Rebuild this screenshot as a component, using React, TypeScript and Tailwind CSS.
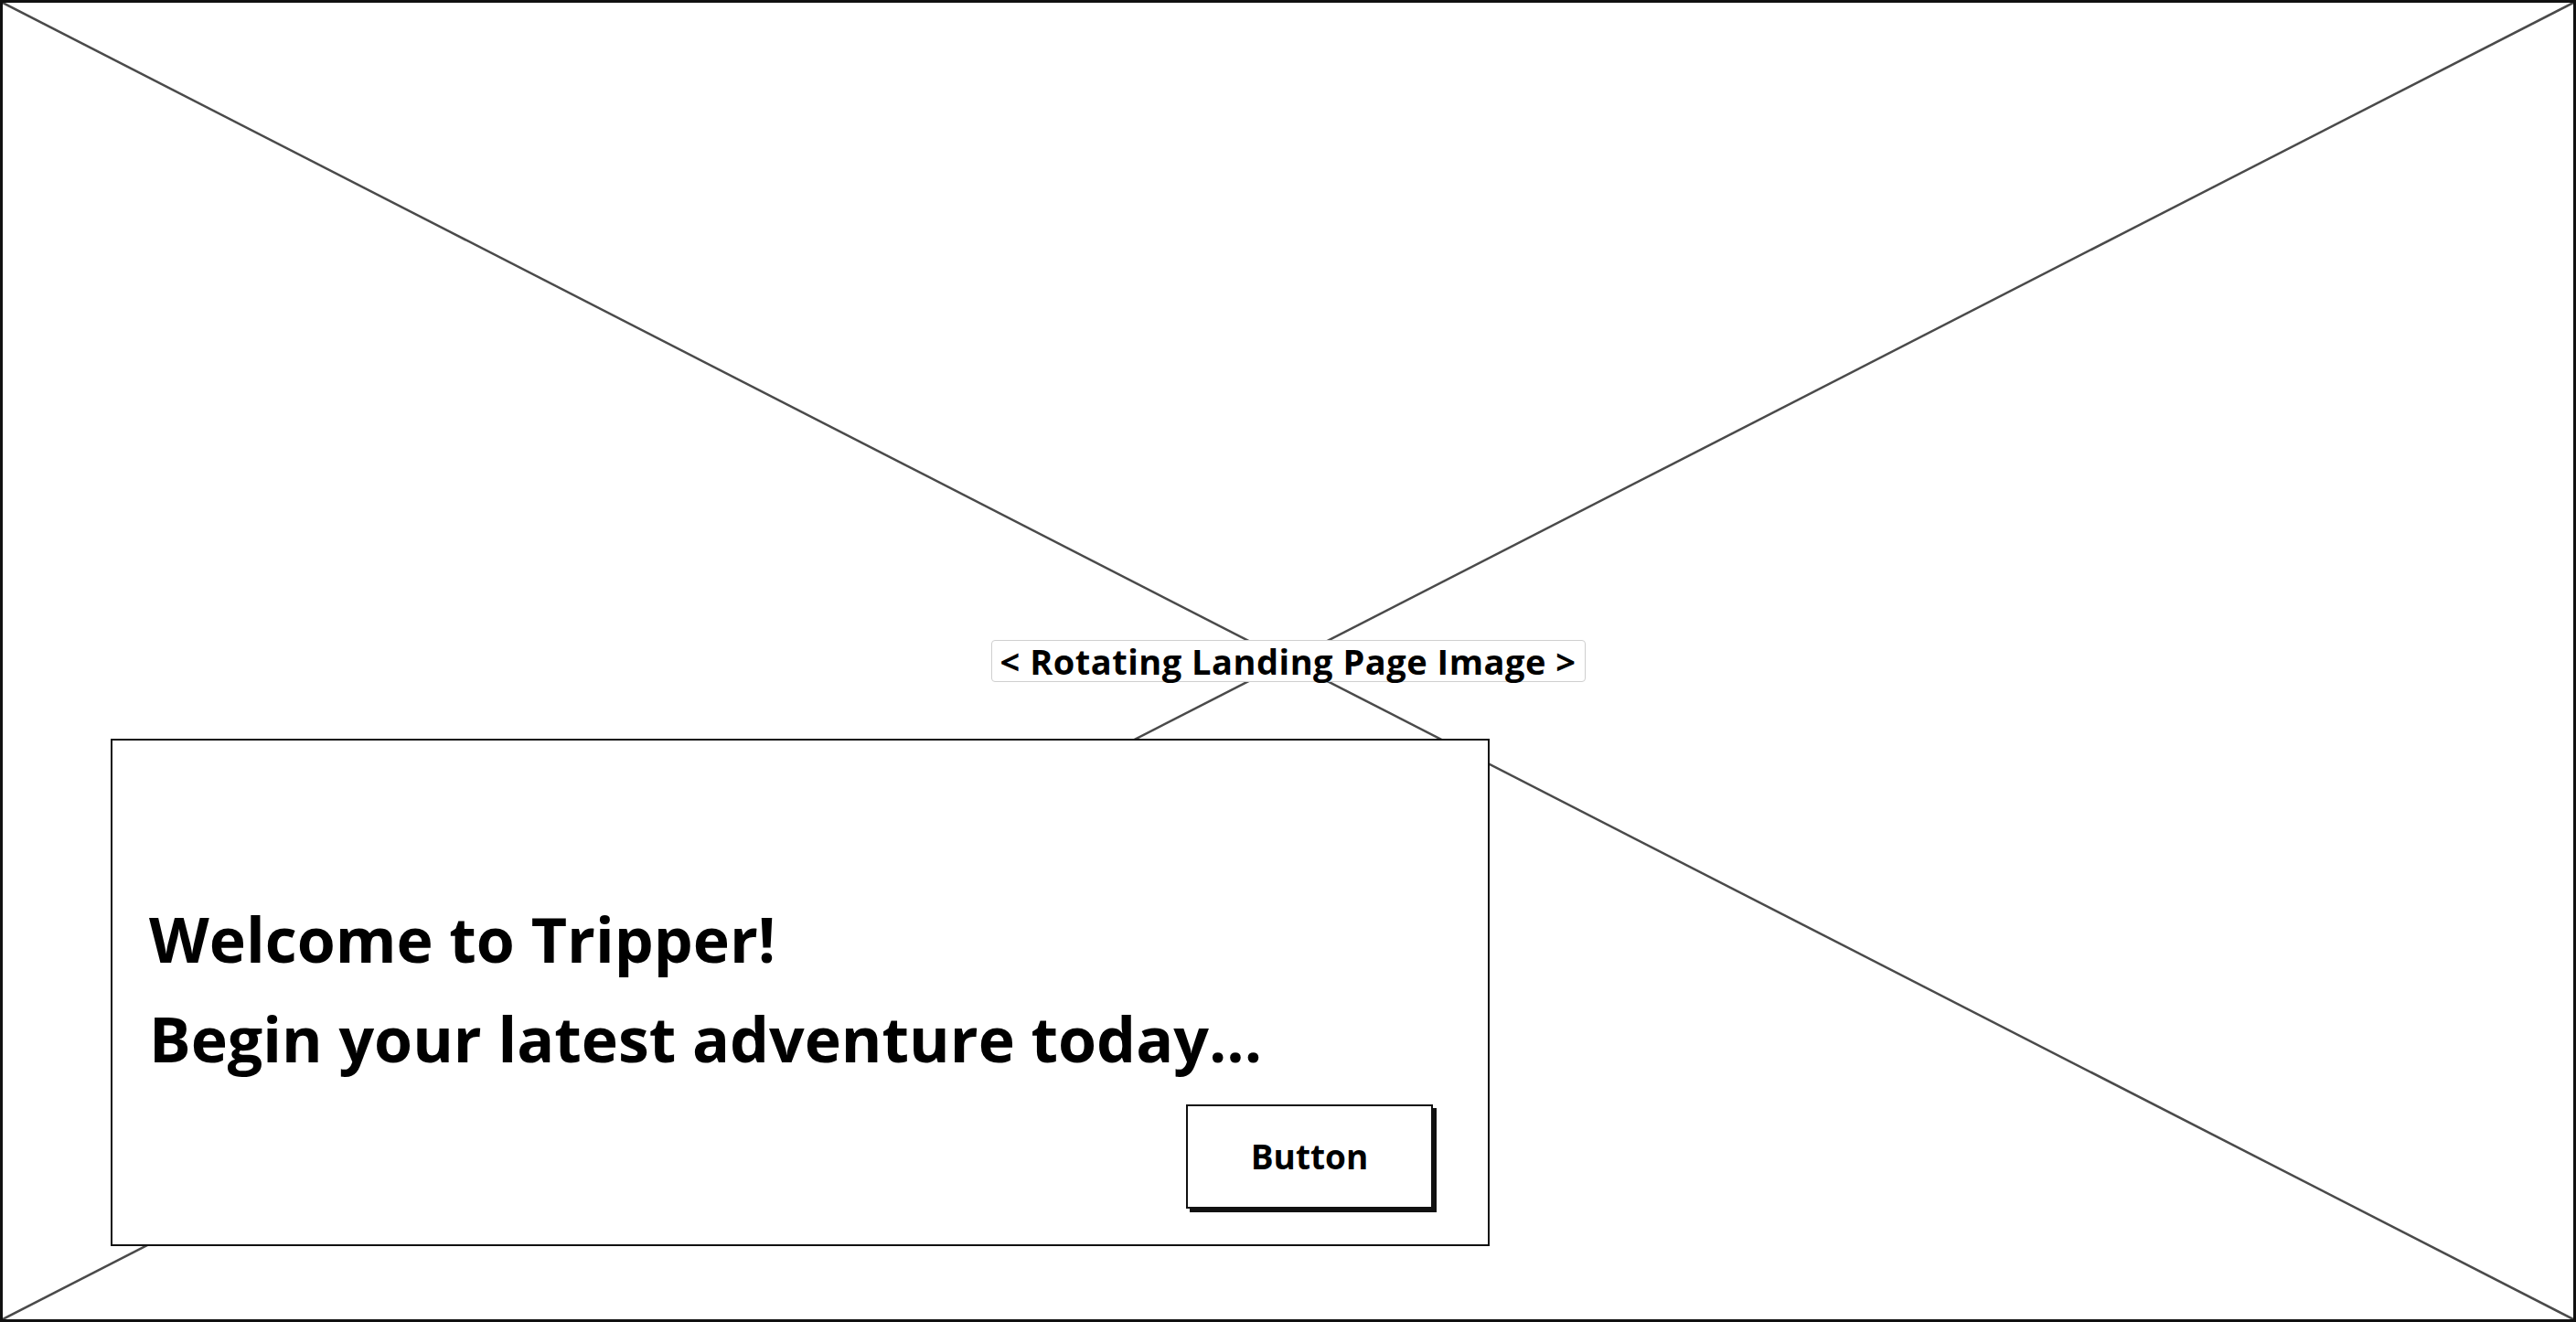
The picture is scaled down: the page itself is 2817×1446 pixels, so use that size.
import React from "react";

const font = { fontFamily: "'Open Sans', Lato, sans-serif" };

export default function App() {
  return (
    <div className="relative h-[1446px] w-[2817px] overflow-hidden border-[3px] border-[#111] bg-white" style={font}>
      {/* image placeholder cross */}
      <svg className="absolute inset-0 h-full w-full" viewBox="0 0 2811 1440" preserveAspectRatio="none">
        <line x1="0" y1="0" x2="2811" y2="1440" stroke="#4a4a4a" strokeWidth="2.5" />
        <line x1="2811" y1="0" x2="0" y2="1440" stroke="#4a4a4a" strokeWidth="2.5" />
      </svg>

      <div className="relative flex h-full flex-col pt-[697px]">
        <div className="self-center flex h-[46px] w-[650px] items-center justify-center rounded-[4px] border border-[#cfcfcf] bg-white text-[38px] font-bold tracking-[0.5px] text-black">
          &lt; Rotating Landing Page Image &gt;
        </div>

        <div className="ml-[118px] mt-[62px] flex h-[555px] w-[1508px] flex-col border-2 border-[#111] bg-white pl-[40px] pr-[60px] pt-[162px]">
          <h1 className="text-[68px] font-bold leading-[109px] text-black">Welcome to Tripper!</h1>
          <p className="text-[68px] font-bold leading-[109px] text-black">Begin your latest adventure today...</p>
          <div className="mt-[18px] flex justify-end">
            <button className="flex h-[114px] w-[270px] items-center justify-center border-2 border-[#111] bg-white text-[37px] font-bold text-black shadow-[4px_4px_0_#111]">
              Button
            </button>
          </div>
        </div>
      </div>
    </div>
  );
}
